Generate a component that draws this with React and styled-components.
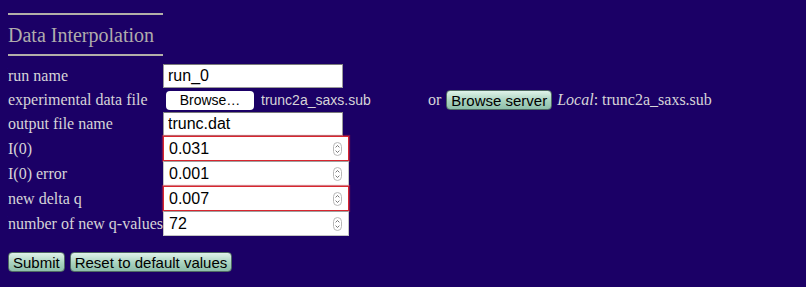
import React from 'react'
import styled, { createGlobalStyle } from 'styled-components'

const GlobalStyle = createGlobalStyle`
  body {
    margin: 8px;
    background: #1b0066;
    color: #d6d4d8;
    font-family: 'Liberation Serif', 'Times New Roman', serif;
    font-size: 16px;
  }
`

const Header = styled.div`
  width: 155px;
  margin-top: 5px;
  border-top: 2px solid #b3afa8;
  border-bottom: 2px solid #b3afa8;
  padding: 7px 0 6px;
`

const Title = styled.h2`
  margin: 0;
  font-size: 20px;
  font-weight: normal;
  color: #b0acac;
  line-height: 26px;
`

const Form = styled.div`
  display: grid;
  grid-template-columns: 155px auto;
  margin-top: 8px;
  align-items: center;
`

const Label = styled.div`
  height: ${p => p.h || 24}px;
  display: flex;
  align-items: center;
  white-space: nowrap;
`

const Cell = styled.div`
  height: ${p => p.h || 24}px;
  display: flex;
  align-items: center;
`

const TextBox = styled.input`
  box-sizing: border-box;
  width: 180px;
  height: 24px;
  margin: 0;
  border: 1px solid #9a9a9a;
  border-top-color: #7a7a7a;
  padding: 0 4px;
  font-family: 'Liberation Sans', Arial, sans-serif;
  font-size: 16px;
  color: #000;
  background: #fff;
  outline: none;
`

const NumberWrap = styled.div`
  box-sizing: border-box;
  width: 186px;
  height: 25px;
  display: flex;
  align-items: center;
  background: #fff;
  border: 1px solid ${p => (p.invalid ? '#d9262e' : '#c4c4c4')};
  border-top-color: ${p => (p.invalid ? '#d9262e' : '#a0a0a0')};
  box-shadow: ${p => (p.invalid ? '0 0 1px 1px rgba(230,40,60,0.45)' : 'none')};
  padding: 0 6px 0 5px;
`

const NumberText = styled.input`
  flex: 1;
  min-width: 0;
  border: none;
  outline: none;
  padding: 0;
  margin: 0;
  font-family: 'Liberation Sans', Arial, sans-serif;
  font-size: 16px;
  color: #000;
  background: transparent;
`

const FileRow = styled.div`
  display: flex;
  align-items: center;
  font-family: 'Liberation Sans', Arial, sans-serif;
  font-size: 14px;
`

const FilePicker = styled.div`
  width: 262px;
  display: flex;
  align-items: center;
  gap: 7px;
  margin-left: 3px;
`

const FileButton = styled.button`
  box-sizing: border-box;
  width: 88px;
  height: 19px;
  padding: 0;
  border: none;
  border-radius: 4px;
  background: #fff;
  font-family: 'Liberation Sans', Arial, sans-serif;
  font-size: 14px;
  color: #000;
`

const Or = styled.span`
  font-family: 'Liberation Serif', 'Times New Roman', serif;
  font-size: 16px;
  margin-right: 5px;
`

const GreenButton = styled.button`
  box-sizing: border-box;
  height: 20px;
  padding: 0 4px;
  margin: 0;
  border: 1px solid #4f6a63;
  border-radius: 4px;
  background: linear-gradient(#e0f3ea, #a9d3bf 55%, #8fbfab);
  font-family: 'Liberation Sans', Arial, sans-serif;
  font-size: 15px;
  color: #000;
`

const Local = styled.span`
  margin-left: 5px;
  font-family: 'Liberation Serif', 'Times New Roman', serif;
  font-size: 16px;

  em {
    font-style: italic;
  }
`

const Buttons = styled.div`
  display: flex;
  gap: 5px;
  margin-top: 16px;
`

const Spinner = () => (
  <svg width="9" height="14" viewBox="0 0 9 14">
    <rect x="0.5" y="0.5" width="8" height="13" rx="4" fill="#fff" stroke="#b8b8b8" />
    <path d="M2.6 5.4 L4.5 3.5 L6.4 5.4" fill="none" stroke="#666" strokeWidth="0.9" />
    <path d="M2.6 8.6 L4.5 10.5 L6.4 8.6" fill="none" stroke="#666" strokeWidth="0.9" />
  </svg>
)

const NumberField = ({ value, invalid }) => (
  <NumberWrap invalid={invalid}>
    <NumberText defaultValue={value} />
    <Spinner />
  </NumberWrap>
)

const numbers = [
  { label: 'I(0)', value: '0.031', invalid: true },
  { label: 'I(0) error', value: '0.001' },
  { label: 'new delta q', value: '0.007', invalid: true },
  { label: 'number of new q-values', value: '72' }
]

export default function App () {
  return (
    <>
      <GlobalStyle />
      <Header>
        <Title>Data Interpolation</Title>
      </Header>
      <Form>
        <Label>run name</Label>
        <Cell><TextBox defaultValue='run_0' /></Cell>

        <Label>experimental data file</Label>
        <Cell>
          <FileRow>
            <FilePicker>
              <FileButton>Browse…</FileButton>
              <span>trunc2a_saxs.sub</span>
            </FilePicker>
            <Or>or</Or>
            <GreenButton>Browse server</GreenButton>
            <Local><em>Local</em>: trunc2a_saxs.sub</Local>
          </FileRow>
        </Cell>

        <Label>output file name</Label>
        <Cell><TextBox defaultValue='trunc.dat' /></Cell>

        {numbers.map(n => (
          <React.Fragment key={n.label}>
            <Label h={25}>{n.label}</Label>
            <Cell h={25}><NumberField value={n.value} invalid={n.invalid} /></Cell>
          </React.Fragment>
        ))}
      </Form>
      <Buttons>
        <GreenButton>Submit</GreenButton>
        <GreenButton>Reset to default values</GreenButton>
      </Buttons>
    </>
  )
}
